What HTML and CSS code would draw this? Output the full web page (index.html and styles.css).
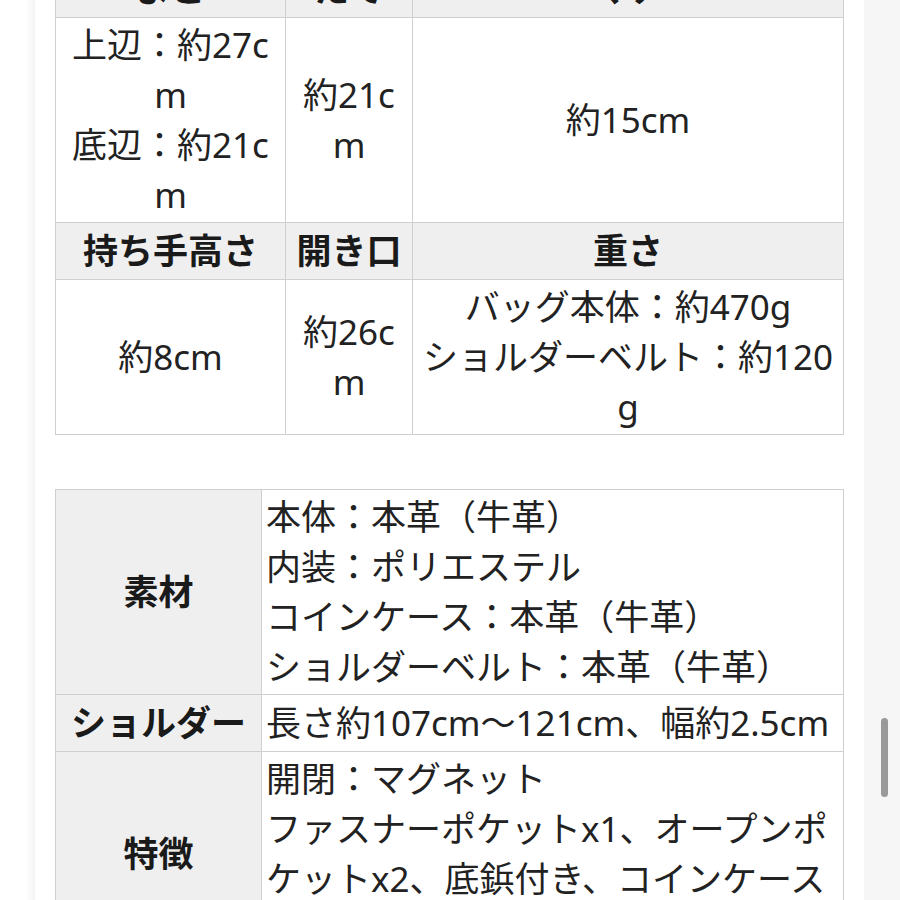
FILE: index.html
```html
<!DOCTYPE html>
<html lang="ja">
<head>
<meta charset="utf-8">
<link rel="stylesheet" href="styles.css">
</head>
<body>
<div class="page">
  <div class="gutter-left"><div class="stripe"></div></div>
  <main class="content">
    <table class="spec spec-size">
      <colgroup><col class="c1"><col class="c2"><col class="c3"></colgroup>
      <tr class="head"><th>よこ</th><th>たて</th><th>マチ</th></tr>
      <tr><td>上辺：約27cm<br>底辺：約21cm</td><td>約21cm</td><td>約15cm</td></tr>
      <tr class="head"><th>持ち手高さ</th><th>開き口</th><th>重さ</th></tr>
      <tr><td>約8cm</td><td>約26cm</td><td>バッグ本体：約470g<br>ショルダーベルト：約120g</td></tr>
    </table>
    <table class="spec spec-detail">
      <colgroup><col class="l"><col class="v"></colgroup>
      <tr><th>素材</th><td>本体：本革（牛革）<br>内装：ポリエステル<br>コインケース：本革（牛革）<br>ショルダーベルト：本革（牛革）</td></tr>
      <tr><th>ショルダー</th><td>長さ約107cm〜121cm、幅約2.5cm</td></tr>
      <tr><th>特徴</th><td>開閉：マグネット<br>ファスナーポケットx1、オープンポケットx2、底鋲付き、コインケース付き</td></tr>
    </table>
  </main>
  <div class="gutter-right"><div class="thumb"></div></div>
</div>
</body>
</html>
```
FILE: styles.css
```css
html, body {
  margin: 0;
  padding: 0;
  background: #ffffff;
  overflow: hidden;
}
.page {
  display: flex;
  width: 900px;
  height: 900px;
  overflow: hidden;
}
.gutter-left {
  width: 35px;
  flex: none;
  display: flex;
  justify-content: flex-end;
}
.stripe {
  width: 10px;
  height: 100%;
  background: linear-gradient(to right, #ffffff, #f4f4f4);
}
.gutter-right {
  width: 37px;
  flex: none;
  background: #f6f6f6;
  display: flex;
  justify-content: center;
  padding-top: 718px;
  box-sizing: border-box;
}
.thumb {
  width: 7px;
  height: 79px;
  margin-left: 4px;
  border-radius: 4px;
  background: #9a9a9a;
}
.content {
  flex: 1;
  padding: 0 20px;
  margin-top: -40px;
  font-family: "Noto Sans", "Noto Sans CJK JP", sans-serif;
  font-size: 35px;
  line-height: 50px;
  color: #222222;
}
.spec {
  width: 788px;
  table-layout: fixed;
  border-collapse: collapse;
  word-break: break-all;
}
.spec th, .spec td {
  border: 1px solid #cfcfcf;
  vertical-align: middle;
}
.spec td {
  padding: 2px 4px;
}
.spec th {
  padding: 3px 4px;
  background: #efefef;
  font-weight: 700;
  color: #1a1a1a;
}
.spec-size td, .spec-size th {
  text-align: center;
}
.spec-size .c1 { width: 230px; }
.spec-size .c2 { width: 127px; }
.spec-size .c3 { width: 431px; }
.spec-detail {
  margin-top: 54px;
}
.spec-detail .l { width: 206px; }
.spec-detail .v { width: 582px; }
.spec-detail th { text-align: center; }
.spec-detail td { text-align: left; }
```
